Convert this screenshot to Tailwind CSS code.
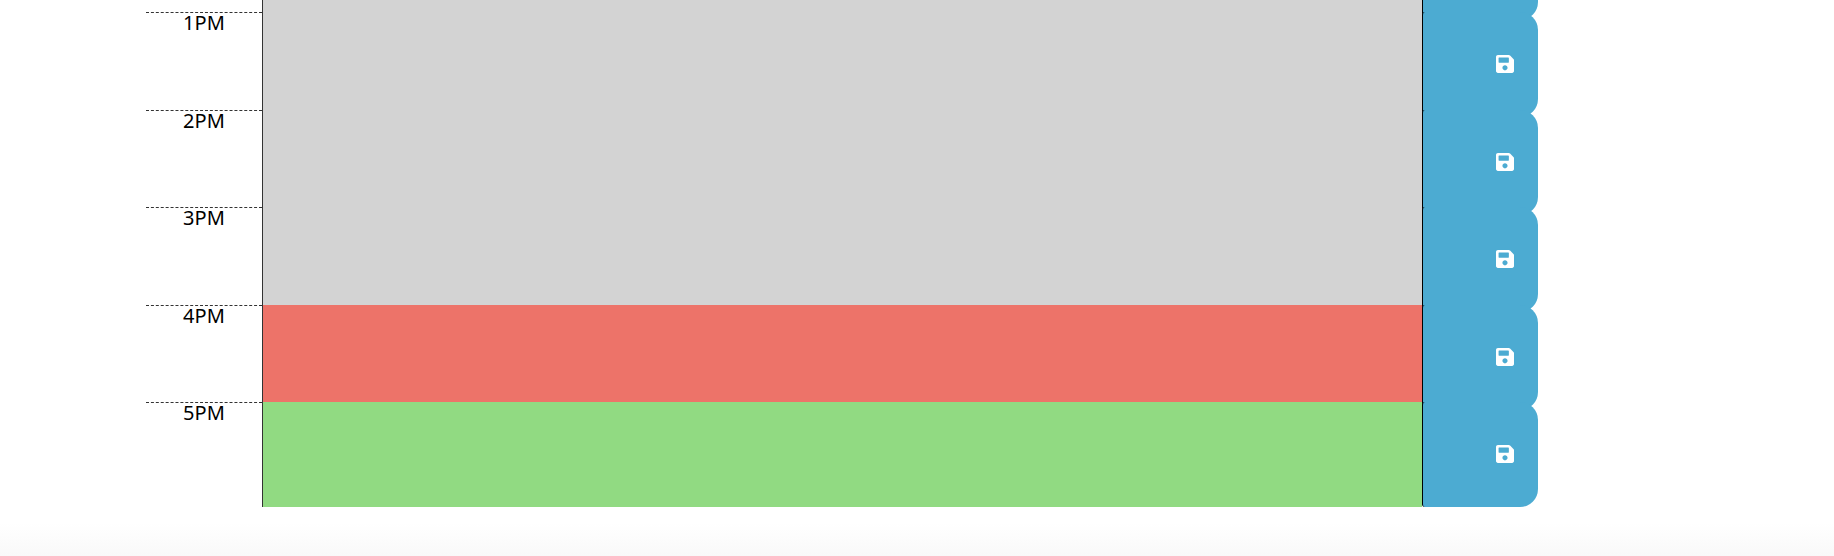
<!DOCTYPE html>
<html lang="en">
<head>
<meta charset="utf-8">
<title>Work Day Scheduler</title>
<script src="https://cdn.jsdelivr.net/npm/@tailwindcss/browser@4"></script>
</head>
<body class="bg-white font-['Noto_Sans','Open_Sans',sans-serif] text-xl text-black">
<svg class="hidden" aria-hidden="true">
  <symbol id="save" viewBox="0 32 448 448"><path fill="currentColor" d="M433.941 129.941l-83.882-83.882A48 48 0 0 0 316.118 32H48C21.49 32 0 53.49 0 80v352c0 26.51 21.49 48 48 48h352c26.51 0 48-21.49 48-48V163.882a48 48 0 0 0-14.059-33.941zM224 416c-35.346 0-64-28.654-64-64s28.654-64 64-64 64 28.654 64 64-28.654 64-64 64zm96-304.52V212c0 6.627-5.373 12-12 12H76c-6.627 0-12-5.373-12-12V108c0-6.627 5.373-12 12-12h228.52c3.183 0 6.235 1.264 8.485 3.515l3.48 3.48A11.996 11.996 0 0 1 320 111.48z"/></symbol>
</svg>
<div class="flex min-h-screen flex-col overflow-hidden">
  <main class="-mt-[85px] flex flex-col pl-[7.95%] pr-[16.15%]">
    <div class="grid h-[97px] grid-cols-[1fr_10fr_1fr]">
      <div></div>
      <textarea aria-label="Earlier hour" class="resize-none border-l border-[#333] bg-[#d3d3d3] px-2 outline-none"></textarea>
      <button aria-label="Save" class="flex h-[105px] items-center justify-end rounded-l-[3px] rounded-r-[18px] border-l border-black bg-[#4cabd2] pr-6 pb-0.5 text-white"><svg class="size-[18px]"><use href="#save"/></svg></button>
    </div>
    <div class="grid h-[98px] grid-cols-[1fr_10fr_1fr]">
      <label for="h1" class="border-t border-dashed border-[#333] pr-[37px] text-right leading-5">1PM</label>
      <textarea id="h1" class="resize-none border-l border-[#333] bg-[#d3d3d3] px-2 outline-none"></textarea>
      <button aria-label="Save 1PM" class="flex h-[105px] items-center justify-end rounded-l-[3px] rounded-r-[18px] border-l border-black bg-[#4cabd2] pr-6 pb-0.5 text-white"><svg class="size-[18px]"><use href="#save"/></svg></button>
    </div>
    <div class="grid h-[97px] grid-cols-[1fr_10fr_1fr]">
      <label for="h2" class="border-t border-dashed border-[#333] pr-[37px] text-right leading-5">2PM</label>
      <textarea id="h2" class="resize-none border-l border-[#333] bg-[#d3d3d3] px-2 outline-none"></textarea>
      <button aria-label="Save 2PM" class="flex h-[105px] items-center justify-end rounded-l-[3px] rounded-r-[18px] border-l border-black bg-[#4cabd2] pr-6 pb-0.5 text-white"><svg class="size-[18px]"><use href="#save"/></svg></button>
    </div>
    <div class="grid h-[98px] grid-cols-[1fr_10fr_1fr]">
      <label for="h3" class="border-t border-dashed border-[#333] pr-[37px] text-right leading-5">3PM</label>
      <textarea id="h3" class="resize-none border-l border-[#333] bg-[#d3d3d3] px-2 outline-none"></textarea>
      <button aria-label="Save 3PM" class="flex h-[105px] items-center justify-end rounded-l-[3px] rounded-r-[18px] border-l border-black bg-[#4cabd2] pr-6 pb-0.5 text-white"><svg class="size-[18px]"><use href="#save"/></svg></button>
    </div>
    <div class="grid h-[97px] grid-cols-[1fr_10fr_1fr]">
      <label for="h4" class="border-t border-dashed border-[#333] pr-[37px] text-right leading-5">4PM</label>
      <textarea id="h4" class="resize-none border-l border-[#333] bg-[#ed7369] px-2 outline-none"></textarea>
      <button aria-label="Save 4PM" class="flex h-[105px] items-center justify-end rounded-l-[3px] rounded-r-[18px] border-l border-black bg-[#4cabd2] pr-6 pb-0.5 text-white"><svg class="size-[18px]"><use href="#save"/></svg></button>
    </div>
    <div class="grid h-[105px] grid-cols-[1fr_10fr_1fr]">
      <label for="h5" class="border-t border-dashed border-[#333] pr-[37px] text-right leading-5">5PM</label>
      <textarea id="h5" class="resize-none border-l border-[#333] bg-[#91da82] px-2 outline-none"></textarea>
      <button aria-label="Save 5PM" class="flex h-[105px] items-center justify-end rounded-l-[3px] rounded-r-[18px] border-l border-black bg-[#4cabd2] pr-6 pb-0.5 text-white"><svg class="size-[18px]"><use href="#save"/></svg></button>
    </div>
  </main>
  <div class="mt-4 grow bg-linear-to-b from-white to-[#f9f9f9]"></div>
</div>
</body>
</html>
